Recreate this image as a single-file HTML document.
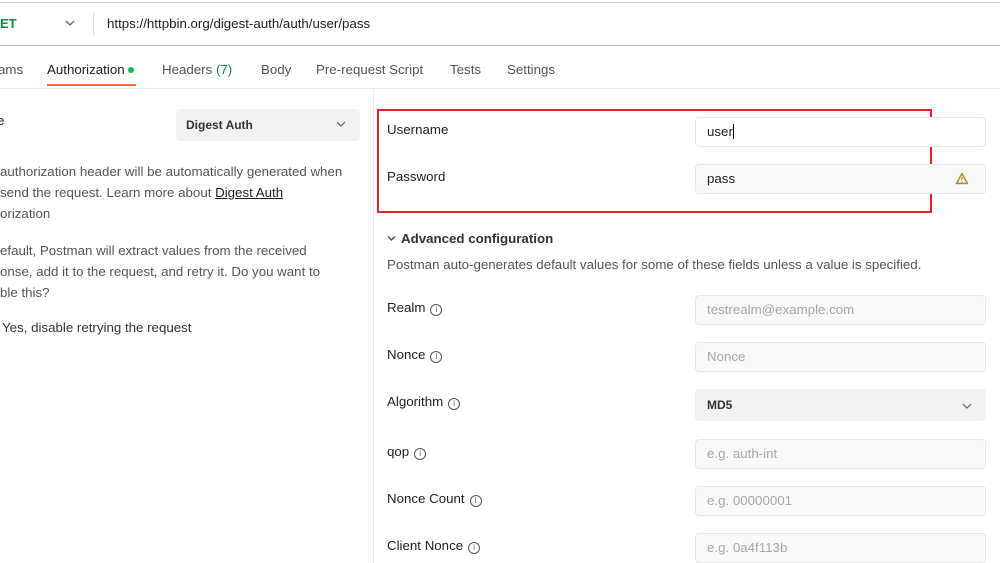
<!DOCTYPE html>
<html><head><meta charset="utf-8"><style>
*{margin:0;padding:0;box-sizing:border-box}
body{width:1000px;height:563px;overflow:hidden;background:#fff;font-family:"Liberation Sans",sans-serif;font-size:13.3px;color:#212121;position:relative}
.a{position:absolute;white-space:nowrap}
.in{position:absolute;left:695px;width:291px;height:30px;border:1px solid #e6e6e6;border-radius:4px;background:#f9f9f9;color:#a6a6a6;padding-left:11px;line-height:28px;font-size:13.3px}
.lbl{position:absolute;left:387px;font-size:13.3px;color:#212121}
.i{display:inline-block;width:12px;height:12px;border:1px solid #555;border-radius:50%;font-size:8px;line-height:10px;text-align:center;margin-left:5px;vertical-align:0px;color:#555}
.g{color:#555}
</style></head><body>
<div class="a" style="left:0;top:2px;width:1000px;height:1px;background:#cfcfcf"></div>
<div class="a" style="left:0;top:16px;font-weight:bold;color:#0b8a43;font-size:13px">ET</div>
<svg class="a" style="left:64px;top:19px" width="12" height="8"><path d="M2 2l4 4 4-4" stroke="#666" fill="none" stroke-width="1.3"/></svg>
<div class="a" style="left:93px;top:13px;width:1px;height:22px;background:#e0e0e0"></div>
<div class="a" style="left:107px;top:16px;color:#212121">https://httpbin.org/digest-auth/auth/user/pass</div>
<div class="a" style="left:0;top:45px;width:1000px;height:1px;background:#bdbdbd"></div>
<div class="a g" style="left:-2px;top:62px">ams</div>
<div class="a" style="left:47px;top:62px;color:#212121">Authorization <span style="display:inline-block;width:6px;height:6px;border-radius:50%;background:#0cbb52;vertical-align:1px"></span></div>
<div class="a" style="left:47px;top:84px;width:89px;height:2px;background:#ff6c37"></div>
<div class="a g" style="left:162px;top:62px">Headers <span style="color:#0b8a43">(7)</span></div>
<div class="a g" style="left:261px;top:62px">Body</div>
<div class="a g" style="left:316px;top:62px">Pre-request Script</div>
<div class="a g" style="left:450px;top:62px">Tests</div>
<div class="a g" style="left:507px;top:62px">Settings</div>
<div class="a" style="left:0;top:88px;width:1000px;height:1px;background:#ececec"></div>
<div class="a" style="left:373px;top:88px;width:1px;height:475px;background:#ececec"></div>
<div class="a" style="left:-3px;top:113px">e</div>
<div class="a" style="left:176px;top:109px;width:184px;height:32px;background:#f2f2f2;border-radius:4px"></div>
<div class="a" style="left:186px;top:118px;font-weight:bold;font-size:12px;color:#333">Digest Auth</div>
<svg class="a" style="left:336px;top:121px" width="10" height="7"><path d="M1 1l4 4 4-4" stroke="#666" fill="none" stroke-width="1.2"/></svg>
<div class="a g" style="left:0;top:161px;line-height:21px">authorization header will be automatically generated when<br>send the request. Learn more about <span style="color:#212121;text-decoration:underline">Digest Auth</span><br>orization</div>
<div class="a g" style="left:0;top:240px;line-height:21px">efault, Postman will extract values from the received<br>onse, add it to the request, and retry it. Do you want to<br>ble this?</div>
<div class="a" style="left:2px;top:320px;color:#333">Yes, disable retrying the request</div>
<div class="a" style="left:377px;top:109px;width:555px;height:104px;border:2px solid #e8202a"></div>
<div class="lbl" style="top:122px">Username</div>
<div class="in" style="top:117px;background:#fff;color:#212121">user<span style="display:inline-block;width:1px;height:15px;background:#000;vertical-align:-3px"></span></div>
<div class="lbl" style="top:169px">Password</div>
<div class="in" style="top:164px;color:#212121">pass</div>
<svg class="a" style="left:955px;top:172px" width="14" height="13"><path d="M7 1.5L1.5 11.5h11z" stroke="#b58a1f" fill="none" stroke-width="1.4" stroke-linejoin="round"/><path d="M7 5v3.3M7 9.5v1" stroke="#b58a1f" stroke-width="1.4"/></svg>
<svg class="a" style="left:387px;top:235px" width="9" height="7"><path d="M1 1.5l3.5 3.5 3.5-3.5" stroke="#444" fill="none" stroke-width="1.3"/></svg>
<div class="a" style="left:401px;top:231px;font-weight:bold;color:#333">Advanced configuration</div>
<div class="a g" style="left:387px;top:257px">Postman auto-generates default values for some of these fields unless a value is specified.</div>
<div class="lbl" style="top:300px">Realm<span class="i">i</span></div>
<div class="in" style="top:295px">testrealm@example.com</div>
<div class="lbl" style="top:347px">Nonce<span class="i">i</span></div>
<div class="in" style="top:342px">Nonce</div>
<div class="lbl" style="top:394px">Algorithm<span class="i">i</span></div>
<div class="in" style="top:389px;height:32px;background:#f2f2f2;border-color:#f2f2f2;color:#333;font-weight:bold;font-size:12px;line-height:30px">MD5</div>
<svg class="a" style="left:962px;top:403px" width="10" height="7"><path d="M1 1l4 4 4-4" stroke="#666" fill="none" stroke-width="1.2"/></svg>
<div class="lbl" style="top:444px">qop<span class="i">i</span></div>
<div class="in" style="top:439px">e.g. auth-int</div>
<div class="lbl" style="top:491px">Nonce Count<span class="i">i</span></div>
<div class="in" style="top:486px">e.g. 00000001</div>
<div class="lbl" style="top:538px">Client Nonce<span class="i">i</span></div>
<div class="in" style="top:533px">e.g. 0a4f113b</div>
</body></html>
